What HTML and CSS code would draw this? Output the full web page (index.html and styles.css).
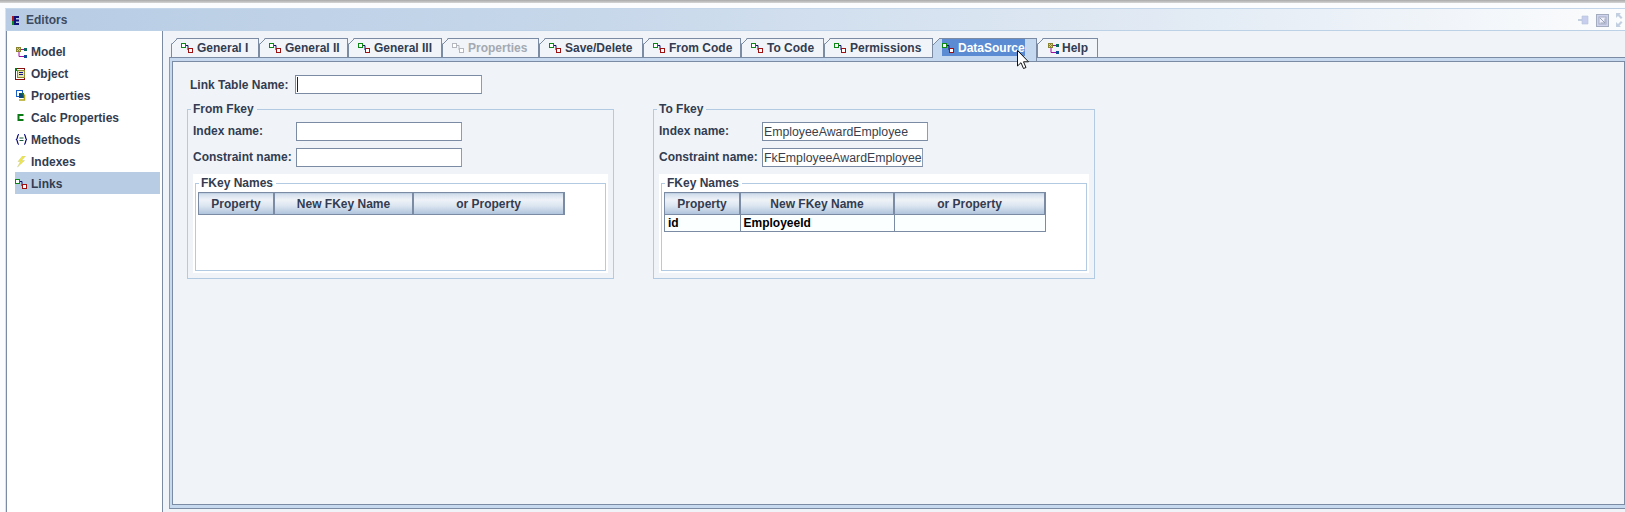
FILE: index.html
```html
<!DOCTYPE html>
<html lang="en">
<head>
<meta charset="UTF-8" />
<title>Editors</title>
<link rel="stylesheet" href="styles.css">
</head>
<body>

<svg class="sprites" xmlns="http://www.w3.org/2000/svg">
  <symbol id="i-link" viewBox="0 0 12 10">
    <path d="M4 2.500h3v4.500h1" fill="none" stroke="var(--line, #10106a)"/>
    <rect x="0.500" y="0.500" width="4" height="4" fill="#fff" stroke="var(--from, #0a8a14)"/>
    <rect x="7.500" y="5.500" width="4" height="4" fill="#fff" stroke="var(--to, #a01010)"/>
  </symbol>
  <symbol id="i-model" viewBox="-1 -1 12 12">
    <path d="M3 5v4.500h5M5 2.500h3" fill="none" stroke="#a010a0"/>
    <rect x="0" y="0" width="5" height="5" fill="#8a8430"/>
    <path d="M1 1h1v1h-1zM3 1h1v1h-1zM2 2h1v1h-1zM1 3h1v1h-1zM3 3h1v1h-1z" fill="#d8d48a"/>
    <rect x="8" y="1" width="3" height="3" fill="#0b6a60"/>
    <rect x="8" y="8" width="3" height="3" fill="#114a9a"/>
  </symbol>
  <symbol id="i-object" viewBox="0 0 12 12">
    <rect x="0.500" y="0.500" width="9" height="11" fill="#fff" stroke="#8a1010"/>
    <rect x="2.500" y="2.500" width="7" height="7" fill="#e8e6b0" stroke="#8e8a30"/>
    <path d="M4 4h4v1h-4zM4 6h4v1h-4z" fill="#10108a"/>
    <path d="M0 0h2v3h-2z" fill="#0a7a14"/>
  </symbol>
  <symbol id="i-props" viewBox="-1 0 12 12">
    <rect x="0.500" y="0.500" width="6" height="6" fill="#fff" stroke="#1860c8"/>
    <rect x="3" y="3" width="5" height="5" fill="#0c4a78"/>
    <path d="M5 3h3v3z" fill="#1a7a2a"/>
    <path d="M8.500 4.500v5.500h-5.500" fill="none" stroke="#b0a820" stroke-width="1.500"/>
  </symbol>
  <symbol id="i-calc" viewBox="0 0 12 12">
    <path d="M8.500 3H3.500V8H8.500" fill="none" stroke="#0a7a14" stroke-width="2"/>
  </symbol>
  <symbol id="i-method" viewBox="-1 0 12 12">
    <path d="M3 .5c-2 0-1 4-2.500 5 1.500 1 .5 5 2.500 5M8 .5c2 0 1 4 2.500 5-1.500 1-.5 5-2.500 5" fill="none" stroke="#0a0a80" stroke-width="1.200"/>
    <path d="M3.500 4h4M3.500 6.500h4" stroke="#1a5a3a"/>
  </symbol>
  <symbol id="i-index" viewBox="-2 0 12 12">
    <path d="M5.500 0L1 5.500h2.500L.5 11l7-6.500h-3L8.500 0z" fill="#f2e83a" stroke="#c8c89a" stroke-width=".5"/>
  </symbol>
</svg>

<div class="top-strip"></div>

<div class="editor">
  <div class="title-bar">
    <svg class="title-icon" viewBox="0 0 7 9" width="7" height="9">
      <rect width="2" height="5" fill="#b01818"/>
      <rect y="5" width="2" height="4" fill="#12881c"/>
      <path d="M2 0h5v2h-3v1.500h3v2h-3v1.500h3v2h-5z" fill="#10107a"/>
    </svg>
    <span class="title-text">Editors</span>
    <div class="title-tools">
      <svg width="11" height="10" viewBox="0 0 11 10">
        <path d="M0 4h4v2h-4z" fill="#c4d0e0"/>
        <path d="M4 1h6v8h-6z" fill="#c8cfee" stroke="#b4c4da" stroke-width=".6"/>
      </svg>
      <svg width="13" height="13" viewBox="0 0 13 13">
        <rect x=".5" y=".5" width="12" height="12" fill="#cfd3ee" stroke="#a4acc0"/>
        <rect x="3" y="3" width="7" height="7" fill="#f0f1fa" stroke="#a4acc0"/>
        <path d="M4 4l5 5M9 4.500v4.500h-4.500" fill="none" stroke="#98a2ba"/>
      </svg>
      <svg width="7" height="14" viewBox="0 0 7 14">
        <path d="M0 0h5l-1.500 1.500 3 3-1.500 1.500-3-3L0 5zM0 14h5l-1.500-1.500 3-3-1.500-1.500-3 3L0 9z" fill="#c2cfe0"/>
      </svg>
    </div>
  </div>

  <div class="editor-body">
    <ul class="nav-list">
      <li class="nav-item"><svg class="nav-icon"><use href="#i-model"/></svg>Model</li>
      <li class="nav-item"><svg class="nav-icon"><use href="#i-object"/></svg>Object</li>
      <li class="nav-item"><svg class="nav-icon"><use href="#i-props"/></svg>Properties</li>
      <li class="nav-item"><svg class="nav-icon"><use href="#i-calc"/></svg>Calc Properties</li>
      <li class="nav-item"><svg class="nav-icon"><use href="#i-method"/></svg>Methods</li>
      <li class="nav-item"><svg class="nav-icon"><use href="#i-index"/></svg>Indexes</li>
      <li class="nav-item nav-item-selected"><svg class="nav-icon"><use href="#i-link"/></svg>Links</li>
    </ul>

    <div class="tab-area">
      <div class="tab-strip">
        <div class="tab"><svg class="tab-icon"><use href="#i-link"/></svg>General I</div>
        <div class="tab"><svg class="tab-icon"><use href="#i-link"/></svg>General II</div>
        <div class="tab"><svg class="tab-icon"><use href="#i-link"/></svg>General III</div>
        <div class="tab tab-disabled"><svg class="tab-icon"><use href="#i-link"/></svg>Properties</div>
        <div class="tab"><svg class="tab-icon"><use href="#i-link"/></svg>Save/Delete</div>
        <div class="tab"><svg class="tab-icon"><use href="#i-link"/></svg>From Code</div>
        <div class="tab"><svg class="tab-icon"><use href="#i-link"/></svg>To Code</div>
        <div class="tab"><svg class="tab-icon"><use href="#i-link"/></svg>Permissions</div>
        <div class="tab tab-active">
          <span class="tab-highlight"><svg class="tab-icon"><use href="#i-link"/></svg>DataSource</span>
          <svg class="cursor" width="13" height="20" viewBox="0 0 13 20">
            <path d="M.5.500V16L4 12.700 6.500 18.500 9 17.500 6.500 11.800H11.500z" fill="#fff" stroke="#111"/>
          </svg>
        </div>
        <div class="tab"><svg class="tab-icon tab-icon-tall"><use href="#i-model"/></svg>Help</div>
      </div>

      <div class="tab-pane">
        <div class="tab-content">
          <div class="link-row">
            <span class="link-label">Link Table Name:</span>
            <div class="field field-link"><span class="caret"></span></div>
          </div>

          <div class="fkeys">
            <fieldset class="fkey fkey-from">
              <legend>From Fkey</legend>
              <div class="form-rows">
                <label class="form-label">Index name:</label>
                <div class="field field-wide"></div>
                <label class="form-label">Constraint name:</label>
                <div class="field field-wide"></div>
              </div>
              <div class="names-panel">
                <fieldset class="names">
                  <legend>FKey Names</legend>
                  <table class="grid grid-from">
                    <thead>
                      <tr><th>Property</th><th>New FKey Name</th><th>or Property</th></tr>
                    </thead>
                  </table>
                </fieldset>
              </div>
            </fieldset>

            <fieldset class="fkey fkey-to">
              <legend>To Fkey</legend>
              <div class="form-rows">
                <label class="form-label">Index name:</label>
                <div class="field field-wide">EmployeeAwardEmployee</div>
                <label class="form-label">Constraint name:</label>
                <div class="field field-narrow">FkEmployeeAwardEmployee</div>
              </div>
              <div class="names-panel">
                <fieldset class="names">
                  <legend>FKey Names</legend>
                  <table class="grid grid-to">
                    <thead>
                      <tr><th>Property</th><th>New FKey Name</th><th>or Property</th></tr>
                    </thead>
                    <tbody>
                      <tr><td>id</td><td>EmployeeId</td><td></td></tr>
                    </tbody>
                  </table>
                </fieldset>
              </div>
            </fieldset>
          </div>
        </div>
      </div>
    </div>
  </div>
</div>

</body>
</html>
```

FILE: styles.css
```css
html, body {
  margin: 0;
  height: 512px;
  overflow: hidden;
}
body {
  font-family: "Liberation Sans", Arial, sans-serif;
  font-size: 12px;
  font-weight: bold;
  color: #333c50;
  background: #fbfcfd;
}
.sprites {
  position: absolute;
  width: 0;
  height: 0;
}
.top-strip {
  height: 3px;
  background: linear-gradient(#a9a9a9, #d5d5d5);
  margin-bottom: 5px;
}

/* editor frame */
.editor {
  margin-left: 5px;
  border-top: 1px solid #c4d6ea;
  border-left: 1px solid #d5e3f2;
  height: 503px;
  display: flex;
  flex-direction: column;
}
.title-bar {
  height: 22px;
  flex: none;
  display: flex;
  align-items: center;
  padding: 1px 0 0 6px;
  border-bottom: 1px solid #bcd0e6;
  box-sizing: border-box;
  background: linear-gradient(90deg, #b7cce4, #c6d7ea 35%, #e4ecf5 75%, #fbfcfd);
}
.title-icon {
  margin-right: 7px;
}
.title-text {
  color: #3d4a60;
}
.title-tools {
  margin-left: auto;
  margin-right: 2px;
  display: flex;
  align-items: center;
  gap: 7px;
}
.editor-body {
  flex: 1;
  display: flex;
  min-height: 0;
}

/* left list */
.nav-list {
  list-style: none;
  margin: 0;
  padding: 9px 2px 0 8px;
  flex: none;
  width: 145px;
  background: #fff;
  border-left: 1px solid #7a8ba3;
  border-right: 1px solid #7a8ba3;
}
.nav-item {
  height: 22px;
  box-sizing: border-box;
  display: flex;
  align-items: center;
  padding-top: 1px;
}
.nav-item-selected {
  background: #b8cde4;
}
.nav-icon {
  width: 12px;
  height: 12px;
  margin-right: 4px;
  flex: none;
}

/* tabs */
.tab-area {
  flex: 1;
  min-width: 0;
  padding-top: 7px;
  background: #f0f4f9;
  display: flex;
  flex-direction: column;
}
.tab-strip {
  height: 19px;
  flex: none;
  margin-left: 8px;
  display: grid;
  grid-template-columns: 88px 89px 94px 97px 104px 98px 83px 109px 104px 61px;
  justify-content: start;
  position: relative;
  z-index: 1;
}
.tab {
  height: 19px;
  box-sizing: border-box;
  position: relative;
  display: flex;
  align-items: center;
  padding-left: 9px;
  border-top: 1px solid #7a8ba3;
  border-left: 1px solid #7a8ba3;
  border-right: 1px solid #7a8ba3;
  background: #f1f5f9;
  clip-path: polygon(6px 0, 100% 0, 100% 100%, 0 100%, 0 6px);
  white-space: nowrap;
}
.tab::before {
  content: "";
  position: absolute;
  left: -1px;
  top: -1px;
  width: 7px;
  height: 7px;
  background: linear-gradient(135deg, transparent 44%, #7a8ba3 44%, #7a8ba3 56%, transparent 56%);
}
.tab-icon {
  width: 12px;
  height: 10px;
  margin-right: 4px;
  flex: none;
}
.tab-icon-tall {
  height: 12px;
  margin-right: 3px;
}
.tab-disabled {
  color: #a4a9b2;
  --line: #b4b8be;
  --from: #b4b8be;
  --to: #b4b8be;
}
.tab-active {
  height: 23px;
  padding-left: 8px;
  align-items: flex-start;
  background: #c4d8ef;
  clip-path: none;
  border-left-color: transparent;
  color: #fff;
}
.tab-active::before {
  background: linear-gradient(135deg, #f0f4f9 44%, #7a8ba3 44%, #7a8ba3 56%, transparent 56%);
}
.tab-highlight {
  display: flex;
  align-items: center;
  height: 17px;
  width: 83px;
  background: #5b8bd2;
}
.cursor {
  position: absolute;
  left: 83px;
  top: 11px;
  z-index: 2;
}

/* pane under the tabs */
.tab-pane {
  flex: 1;
  min-height: 0;
  margin-left: 6px;
  margin-bottom: 3px;
  border: 1px solid #7a8ba3;
  border-left-color: #7f9bc8;
  border-right: 0;
  padding: 3px 0 3px 2px;
  background: #c6d9ef;
  display: flex;
}
.tab-content {
  flex: 1;
  min-width: 0;
  border: 1px solid #7a8ba3;
  background: #f0f4f9;
  padding: 13px 0 0 14px;
}
.link-row {
  display: flex;
  align-items: center;
  height: 19px;
  padding-left: 3px;
}
.link-label {
  width: 105px;
  flex: none;
}
.field {
  height: 19px;
  box-sizing: border-box;
  border: 1px solid #7a8ba3;
  border-right-color: #8d9cb0;
  background: #fff;
  font-weight: normal;
  font-size: 12.3px;
  line-height: 18px;
  padding-left: 1px;
  color: #3a3f4c;
  white-space: nowrap;
  overflow: hidden;
}
.field-link {
  width: 187px;
}
.caret {
  display: block;
  width: 1px;
  height: 15px;
  margin-top: 1px;
  background: #222;
}
.field-wide {
  width: 166px;
}
.field-narrow {
  width: 161px;
}

/* fkey groups */
.fkeys {
  display: flex;
  align-items: flex-start;
  gap: 39px;
  margin-top: 8px;
}
fieldset {
  margin: 0;
  min-width: 0;
  box-sizing: border-box;
  border: 1px solid #b3cbe2;
}
legend {
  padding: 0 3px 0 2px;
  margin-left: -2px;
  line-height: 14px;
}
.fkey {
  height: 177px;
  padding: 6px 5px 4px 5px;
}
.fkey-from {
  width: 427px;
}
.fkey-to {
  width: 442px;
}
.form-rows {
  display: grid;
  grid-template-columns: 103px auto;
  justify-content: start;
  align-items: center;
  row-gap: 7px;
}
.form-label {
  padding-bottom: 2px;
}
.names-panel {
  margin-top: 7px;
  height: 99px;
  box-sizing: border-box;
  background: #fff;
  padding: 2px;
}
.names {
  height: 95px;
  padding: 2px 2px 0 2px;
}
.names legend {
  margin-left: 1px;
}

/* grids */
.grid {
  border-collapse: collapse;
  table-layout: fixed;
}
.grid-from {
  width: 367px;
}
.grid-to {
  width: 382px;
}
.grid th {
  height: 21px;
  padding: 0;
  font-weight: bold;
  border: 1px solid #7a8ba3;
  border-right-width: 2px;
  background: linear-gradient(#cfdbea, #eff3f8 30%, #dae4f0 60%, #adc2da);
}
.grid th:nth-child(1) {
  width: 74px;
}
.grid-from th:nth-child(2) {
  width: 137px;
}
.grid-to th:nth-child(2) {
  width: 152px;
}
.grid td {
  height: 16px;
  padding: 0 0 0 3px;
  border: 1px solid #7a8ba3;
  background: #fbffff;
  color: #000;
}
```
